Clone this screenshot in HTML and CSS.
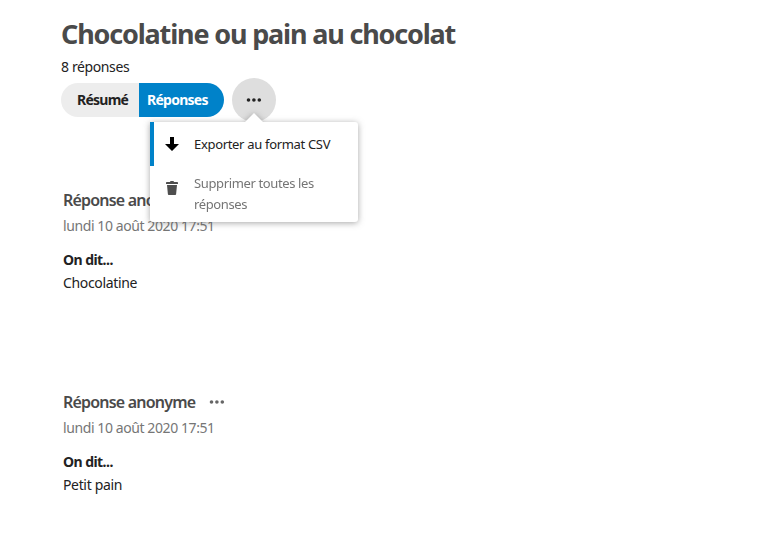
FILE: index.html
```html
<!DOCTYPE html>
<html lang="fr">
<head>
  <meta charset="UTF-8">
  <meta name="viewport" content="width=device-width, initial-scale=1">
  <title>Chocolatine ou pain au chocolat</title>
  <link rel="stylesheet" href="styles.css">
</head>
<body>

  <header class="entete">
    <h1>Chocolatine ou pain au chocolat</h1>
    <p class="total">8 réponses</p>

    <div class="barre">
      <div class="onglets">
        <button class="onglet">Résumé</button>
        <button class="onglet actif">Réponses</button>
      </div>
      <div class="actions">
        <button class="bouton-menu" aria-label="Actions">
          <svg width="16" height="16" viewBox="0 0 16 16"><circle cx="2.5" cy="8" r="1.8"/><circle cx="7.9" cy="8" r="1.8"/><circle cx="13.3" cy="8" r="1.8"/></svg>
        </button>
        <ul class="menu">
          <li class="entree active">
            <svg width="16" height="16" viewBox="0 0 16 16"><path d="M6 1h4v7h5l-7 7-7-7h5z"/></svg>
            <span class="texte-export">Exporter au format CSV</span>
          </li>
          <li class="entree">
            <svg width="16" height="16" viewBox="0 0 16 16"><path d="M6.5 1 6 2H3c-.6 0-1 .4-1 1v1h12V3c0-.6-.4-1-1-1h-3l-.5-1zM3 5l.9 9.2c0 .5.4.8.9.8h6.4c.5 0 .9-.3.9-.8L13 5z"/></svg>
            <span class="texte-suppr">Supprimer toutes les réponses</span>
          </li>
        </ul>
      </div>
    </div>
  </header>

  <main>
    <section class="reponse">
      <div class="titre">
        <h2>Réponse anonyme</h2>
        <svg width="16" height="16" viewBox="0 0 16 16"><circle cx="2.5" cy="8" r="1.8"/><circle cx="7.9" cy="8" r="1.8"/><circle cx="13.3" cy="8" r="1.8"/></svg>
      </div>
      <p class="date">lundi 10 août 2020 17:51</p>
      <h3>On dit...</h3>
      <p class="valeur">Chocolatine</p>
    </section>

    <section class="reponse">
      <div class="titre">
        <h2>Réponse anonyme</h2>
        <svg width="16" height="16" viewBox="0 0 16 16"><circle cx="2.5" cy="8" r="1.8"/><circle cx="7.9" cy="8" r="1.8"/><circle cx="13.3" cy="8" r="1.8"/></svg>
      </div>
      <p class="date">lundi 10 août 2020 17:51</p>
      <h3>On dit...</h3>
      <p class="valeur">Petit pain</p>
    </section>
  </main>

</body>
</html>
```
FILE: styles.css
```css
:root {
  --primaire: #0082c9;
  --texte: #222;
  --titre: #4a4a4a;
  --discret: #767676;
}

* {
  box-sizing: border-box;
}

body {
  margin: 0;
  background: #fff;
  color: var(--texte);
  font-family: "Noto Sans", "Open Sans", sans-serif;
  font-size: 14px;
}

h1, h2, h3, p, ul {
  margin: 0;
  padding: 0;
}

.entete {
  padding: 14px 0 0 61px;
}

h1 {
  color: var(--titre);
  font-size: 27px;
  line-height: 40px;
  font-weight: 700;
  letter-spacing: -1.17px;
  white-space: nowrap;
}

.total {
  line-height: 24px;
  margin-top: 1px;
  letter-spacing: -0.38px;
}

.barre {
  display: flex;
  align-items: center;
  gap: 8px;
  height: 44px;
  margin-top: -1px;
}

.onglets {
  display: flex;
  width: 163px;
  height: 34px;
  border-radius: 17px;
  overflow: hidden;
}

.onglet {
  border: 0;
  padding: 0 0 0 16px;
  width: 78px;
  background: #ededed;
  color: var(--texte);
  font-family: inherit;
  font-size: 14px;
  font-weight: 700;
  line-height: 34px;
  letter-spacing: -0.75px;
  text-align: left;
}

.onglet.actif {
  flex: 1;
  padding-left: 8px;
  background: var(--primaire);
  color: #fff;
}

.actions {
  position: relative;
}

.bouton-menu {
  display: flex;
  align-items: center;
  justify-content: center;
  width: 44px;
  height: 44px;
  padding: 0;
  border: 0;
  border-radius: 50%;
  background: #dedede;
  fill: var(--texte);
}

.menu {
  position: absolute;
  top: 44px;
  left: -82px;
  width: 208px;
  height: 100px;
  background: #fff;
  border-radius: 3px;
  list-style: none;
  filter: drop-shadow(0 1px 3px rgba(77, 77, 77, 0.5));
}

/* Flèche du menu */
.menu::before {
  content: "";
  position: absolute;
  top: -9px;
  left: 95px;
  border: 9px solid transparent;
  border-top: 0;
  border-bottom-color: #fff;
}

.entree {
  display: flex;
  height: 44px;
  padding: 14px 0 0 14px;
  color: #757575;
  font-size: 13px;
  fill: #4e4e4e;
}

.entree span {
  width: 140px;
  margin-left: 14px;
  line-height: 21px;
}

.entree.active {
  border-left: 4px solid var(--primaire);
  padding-left: 10px;
  color: var(--texte);
  fill: #000;
}

.texte-export {
  margin-top: -2px;
  letter-spacing: -0.32px;
  white-space: nowrap;
}

.texte-suppr {
  margin-top: -7px;
  letter-spacing: -0.37px;
}

main {
  padding: 65px 0 0 63px;
}

.reponse {
  height: 202px;
}

.reponse:last-child {
  height: auto;
}

.titre {
  display: flex;
  align-items: center;
  gap: 14px;
  height: 26px;
  fill: #666;
}

h2 {
  color: var(--titre);
  font-size: 16px;
  font-weight: 600;
  line-height: 26px;
  letter-spacing: -0.8px;
}

.date {
  margin-top: 1px;
  color: var(--discret);
  line-height: 24px;
  letter-spacing: -0.41px;
}

h3 {
  margin-top: 10px;
  font-size: 14px;
  font-weight: 700;
  line-height: 24px;
  letter-spacing: -0.55px;
}

.valeur {
  margin-top: -1px;
  line-height: 24px;
  letter-spacing: -0.35px;
}
```
